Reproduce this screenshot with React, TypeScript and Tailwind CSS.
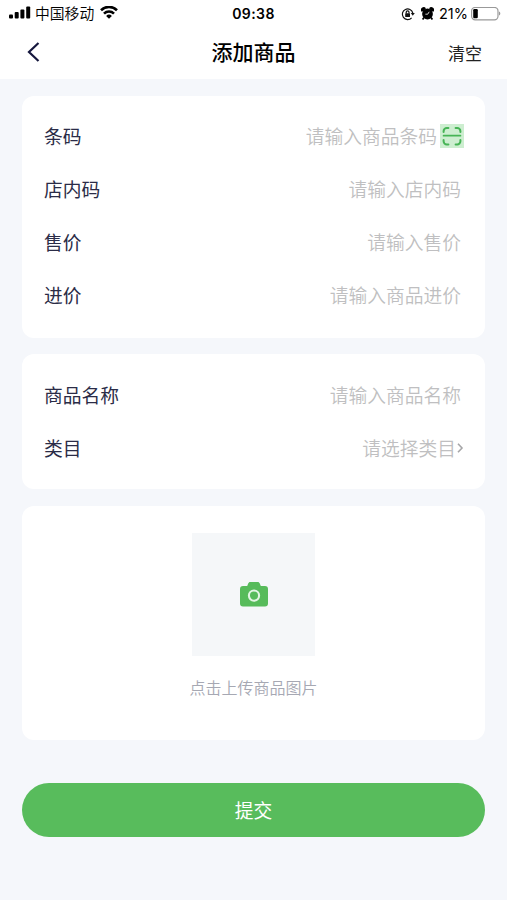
import type { ReactNode } from 'react';

interface Field {
  label: string;
  placeholder: string;
  type?: 'scan' | 'select';
}

const CODE_FIELDS: Field[] = [
  { label: '条码', placeholder: '请输入商品条码', type: 'scan' },
  { label: '店内码', placeholder: '请输入店内码' },
  { label: '售价', placeholder: '请输入售价' },
  { label: '进价', placeholder: '请输入商品进价' },
];

const INFO_FIELDS: Field[] = [
  { label: '商品名称', placeholder: '请输入商品名称' },
  { label: '类目', placeholder: '请选择类目', type: 'select' },
];

function SignalIcon() {
  return (
    <svg width="22" height="14" viewBox="0 0 22 14" fill="#000">
      <rect x="0" y="8.5" width="4" height="4" rx="1" />
      <rect x="5.7" y="6" width="4" height="6.5" rx="1" />
      <rect x="11.4" y="3.5" width="4" height="9" rx="1" />
      <rect x="17.2" y="0.5" width="4" height="12" rx="1" />
    </svg>
  );
}

function WifiIcon() {
  return (
    <svg width="18" height="14" viewBox="0 0 18 14" fill="none" stroke="#000" strokeWidth="2.6">
      <path d="M1 4.2a11.4 11.4 0 0 1 16 0" />
      <path d="M4 7.6a7.1 7.1 0 0 1 10 0" />
      <path d="M9 12.8 6.1 9.9a4.1 4.1 0 0 1 5.8 0z" fill="#000" stroke="none" />
    </svg>
  );
}

function RotationLockIcon() {
  return (
    <svg width="14" height="14" viewBox="0 0 14 14" fill="none" stroke="#111" strokeWidth="1.2">
      <path d="M10.6 10.8A5.3 5.3 0 1 1 11.8 6" />
      <path d="M9.8 6h4l-2 2.7z" fill="#111" stroke="none" />
      <rect x="4.2" y="6.3" width="4.8" height="3.8" rx="0.6" fill="#111" stroke="none" />
      <path d="M5.2 6.5V5.3a1.4 1.4 0 0 1 2.8 0v1.2" />
    </svg>
  );
}

function AlarmIcon() {
  return (
    <svg width="13" height="14" viewBox="0 0 13 14" fill="#000">
      <circle cx="6.5" cy="7" r="5.4" />
      <path d="M0.6 4.8a2.7 2.7 0 0 1 4.3-3.6L3 4zM12.4 4.8a2.7 2.7 0 0 0-4.3-3.6L10 4z" />
      <path d="M3 10.6 1.6 12.6M10 10.6l1.4 2" stroke="#000" strokeWidth="1.7" />
      <path d="M8.2 4.8 6.7 7.2H4.4" fill="none" stroke="#fff" strokeWidth="0.8" />
    </svg>
  );
}

function BatteryIcon() {
  return (
    <svg width="30" height="14" viewBox="0 0 30 14">
      <rect x="0.6" y="0.4" width="26.4" height="12.4" rx="3.6" fill="#fff" stroke="#999" strokeWidth="1.2" />
      <rect x="2.2" y="2" width="4.6" height="9.2" rx="1.2" fill="#000" />
      <path d="M28 4.6c1.8.6 1.8 3.4 0 4z" fill="#999" />
    </svg>
  );
}

function ScanIcon() {
  return (
    <svg className="ml-[3px]" width="24" height="24" viewBox="0 0 24 24" fill="none">
      <path fill="#cdeed0" d="M0 0h24v24H0z" />
      <g stroke="#46b455" strokeWidth="2" strokeLinecap="round">
        <path d="M3.6 8v-.8A3.2 3.2 0 0 1 6.8 4h1.6M15.6 4h1.6a3.2 3.2 0 0 1 3.2 3.2V8" />
        <path d="M3.6 16v1.2a3.2 3.2 0 0 0 3.2 3.2h1.6M15.6 20.4h1.6a3.2 3.2 0 0 0 3.2-3.2V16" />
        <path d="M3.6 11.7h16.8" strokeWidth="1.8" />
      </g>
    </svg>
  );
}

function CameraIcon() {
  return (
    <svg width="28" height="25" viewBox="0 0 28 25">
      <path
        fill="#57bb5b"
        d="M3 4h4.2l1-2.4C8.6.6 9.2 0 10.3 0h7.4c1.1 0 1.7.6 2.1 1.6L20.8 4H25a3 3 0 0 1 3 3v14.5a3 3 0 0 1-3 3H3a3 3 0 0 1-3-3V7a3 3 0 0 1 3-3z"
      />
      <circle cx="14" cy="13.6" r="5.1" fill="none" stroke="#e3f5e4" strokeWidth="2.1" />
    </svg>
  );
}

function StatusBar() {
  return (
    <div className="grid h-[27px] grid-cols-[1fr_auto_1fr] items-center text-black">
      <div className="flex items-center pl-[9px]">
        <SignalIcon />
        <span className="ml-1 text-[14.8px] leading-none font-[350]">中国移动</span>
        <span className="ml-[6px]">
          <WifiIcon />
        </span>
      </div>
      <span className="font-[Inter] text-[14px] font-semibold tracking-[0.4px]">09:38</span>
      <div className="flex items-center justify-end pr-[6px]">
        <RotationLockIcon />
        <span className="ml-[6px]">
          <AlarmIcon />
        </span>
        <span className="mr-[3px] ml-[5px] pt-0.5 font-[Inter] text-[14.5px] leading-none">21%</span>
        <BatteryIcon />
      </div>
    </div>
  );
}

function Card({ className = '', children }: { className?: string; children: ReactNode }) {
  return <section className={`rounded-xl bg-white ${className}`}>{children}</section>;
}

function FieldRow({ label, placeholder, type }: Field) {
  return (
    <div className={`flex h-[53.25px] items-center justify-between pl-[22px] ${type ? 'pr-[21px]' : 'pr-[24px]'}`}>
      <span className="text-[18.75px] text-[#2b2c47]">{label}</span>
      <div className="flex items-center text-[18.75px] font-[350] text-[#bfbfc1]">
        <span>{placeholder}</span>
        {type === 'scan' && <ScanIcon />}
        {type === 'select' && (
          <svg width="8" height="12" viewBox="0 0 8 12" fill="none" stroke="#a6a6a8" strokeWidth="1.6">
            <path d="m2 1.8 4 4.2-4 4.2" />
          </svg>
        )}
      </div>
    </div>
  );
}

export default function App() {
  return (
    <div className="flex h-[900px] w-full flex-col bg-[#f5f7fb] font-['Noto_Sans_CJK_SC',sans-serif]">
      <div className="h-[79px] bg-white">
        <StatusBar />
        <header className="grid h-[50px] grid-cols-[1fr_auto_1fr] items-center">
          <button type="button" aria-label="返回" className="pl-[27px]">
            <svg width="13" height="20" viewBox="0 0 13 20" fill="none" stroke="#15173d" strokeWidth="2.2">
              <path d="M11.5 1 2 10l9.5 9" />
            </svg>
          </button>
          <h1 className="text-[21px] font-medium text-black">添加商品</h1>
          <button type="button" className="pt-0.5 pr-[25px] text-right text-[17px] text-[#222]">清空</button>
        </header>
      </div>

      <main className="flex flex-col px-[22px] pt-[17px]">
        <Card className="h-[242px] pt-[13px]">
          {CODE_FIELDS.map((field) => (
            <FieldRow key={field.label} {...field} />
          ))}
        </Card>

        <Card className="mt-4 h-[135px] pt-[14px]">
          {INFO_FIELDS.map((field) => (
            <FieldRow key={field.label} {...field} />
          ))}
        </Card>

        <Card className="mt-[17px] flex h-[234px] flex-col items-center pt-[27px]">
          <button type="button" aria-label="上传图片" className="flex size-[123px] items-center justify-center bg-[#f5f7f9]">
            <CameraIcon />
          </button>
          <p className="mt-[19px] text-[16px] leading-6 font-[350] text-[#a6a8b3]">点击上传商品图片</p>
        </Card>

        <button type="button" className="mt-[43px] h-[54px] rounded-full bg-[#58bc5c] text-[18.75px] text-white">
          提交
        </button>
      </main>
    </div>
  );
}
